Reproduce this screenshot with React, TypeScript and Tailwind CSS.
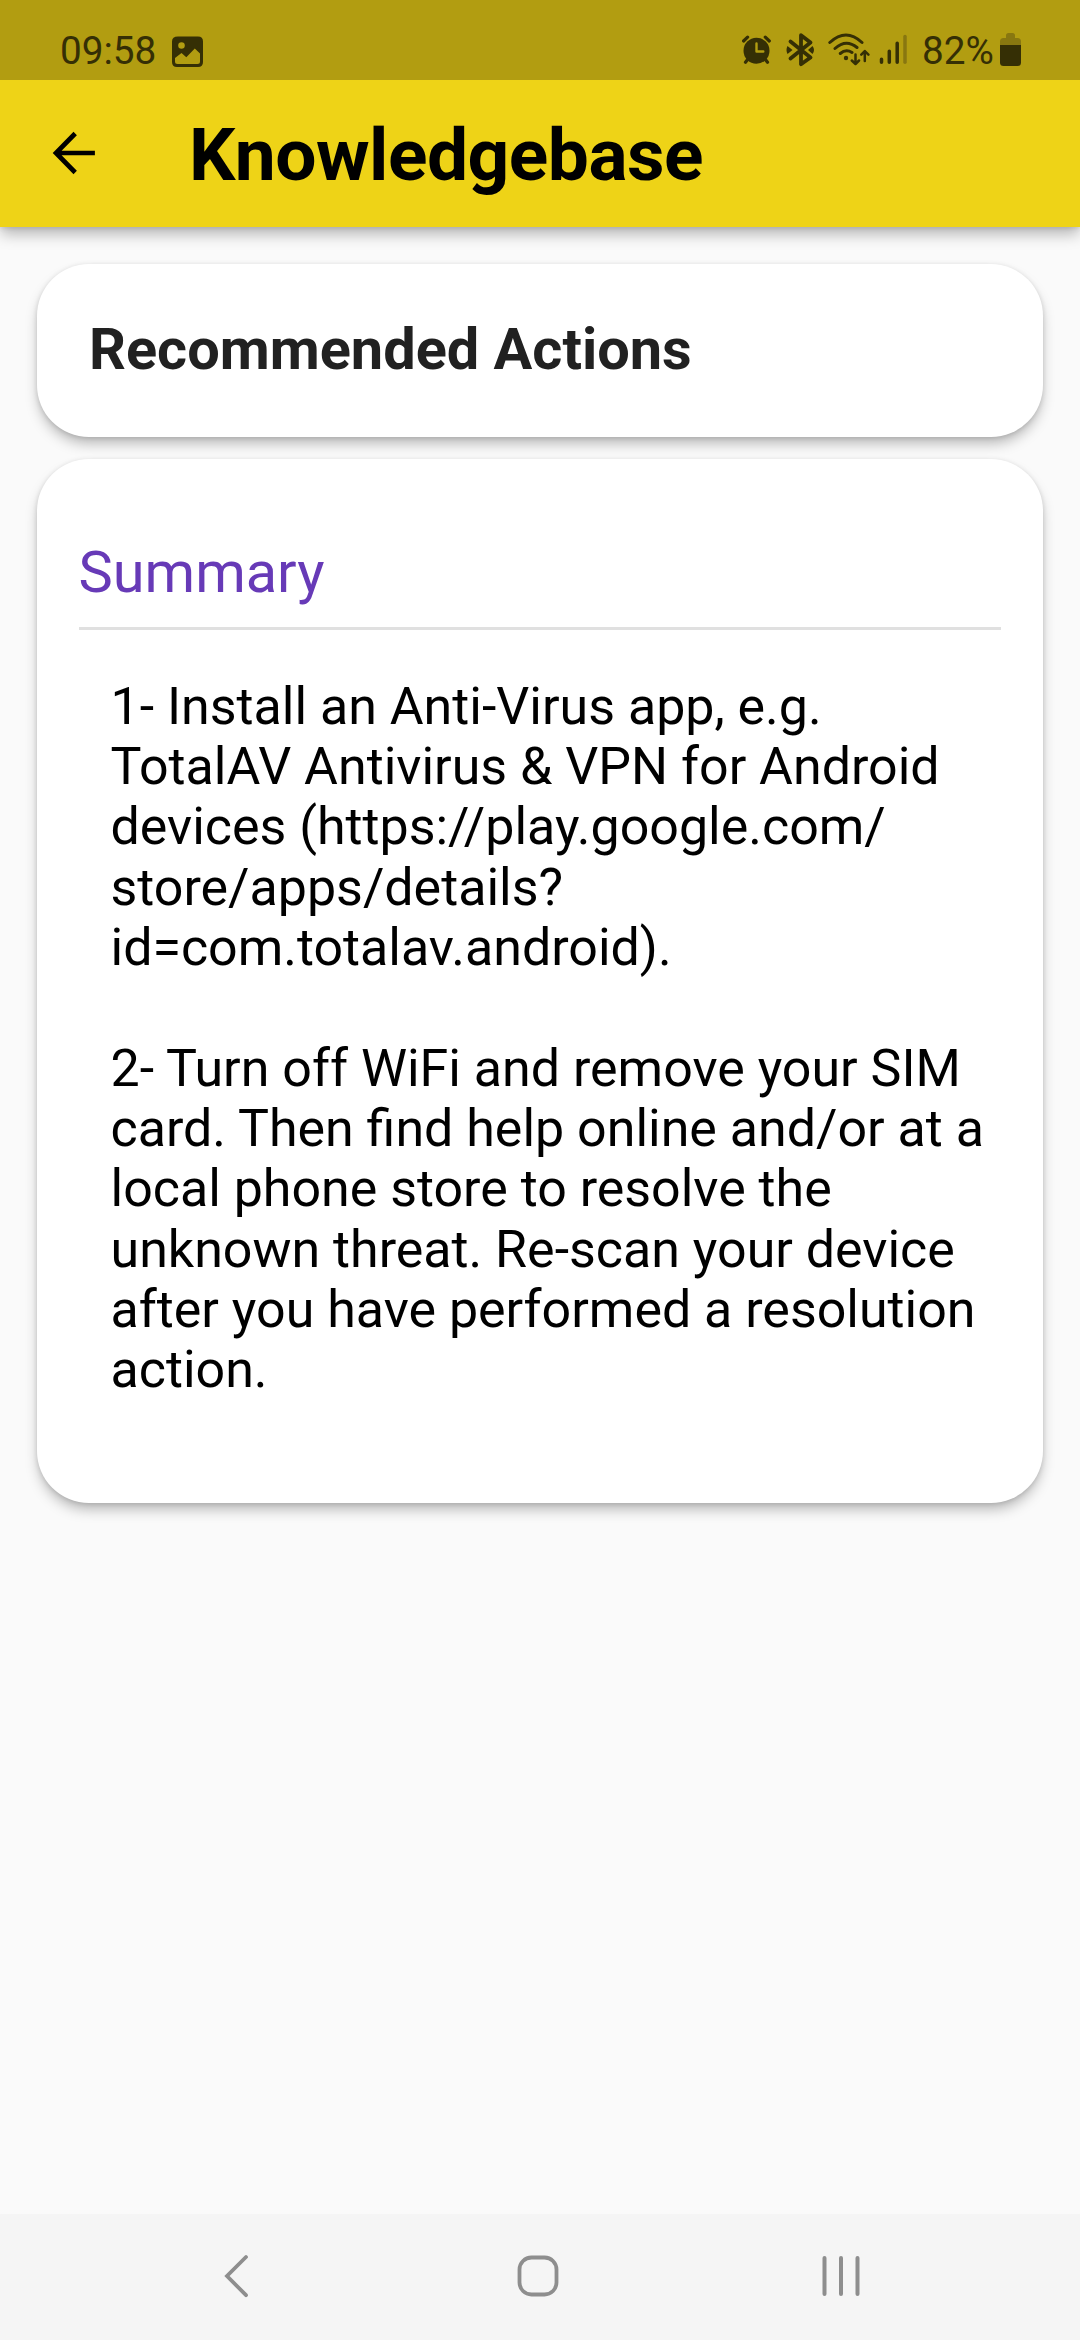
import type { ReactNode } from "react";

const INK = "#352f05";

function PictureIcon() {
  return (
    <svg className="ml-[18px] mt-0.5 h-8 w-8" viewBox="0 0 32 32" fill="none">
      <path
        fill={INK}
        fillRule="evenodd"
        d="M6 0.5H26Q31 .5 31 5.500V26Q31 31 26 31H5Q0 31 0 26V5.500Q0 .5 6 .5ZM9.500 6.200A3.300 3.300 0 1 0 9.500 12.800A3.300 3.300 0 1 0 9.500 6.200ZM3 22V25.500Q3 28 5.500 28H25.500Q28 28 28 25.500V17.500L22.800 12.600L14.300 21.200L9.500 17Z"
      />
    </svg>
  );
}

function AlarmIcon() {
  return (
    <svg className="h-8 w-[30px]" viewBox="0 0 30 32" fill="none" stroke={INK} strokeLinecap="round">
      <circle cx="14.500" cy="16.700" r="13" fill={INK} stroke="none" />
      <path d="M1.600 7L5.600 3.200M27.300 7L23.300 3.200" strokeWidth="3.200" />
      <path d="M6 25L3.500 28.300M23 25L25.500 28.300" strokeWidth="3.200" />
      <path d="M14.500 9.500V17.500H21.300" stroke="#b29d11" strokeWidth="2.400" strokeLinejoin="round" />
    </svg>
  );
}

function BluetoothIcon() {
  return (
    <svg className="ml-[14px] h-[34px] w-[30px]" viewBox="0 0 30 34" fill="none">
      <path
        d="M4.500 8.500L24.500 24.500L15 31.200V2.200L24.500 9.500L4.500 25.500"
        stroke={INK}
        strokeWidth="3.800"
        strokeLinecap="round"
        strokeLinejoin="round"
      />
      <path d="M1.500 13L6.500 17L1.500 21Q-.5 17 1.500 13ZM26.500 13L22 17L26.500 21Q29.500 17 26.500 13Z" fill={INK} />
    </svg>
  );
}

function WifiIcon() {
  return (
    <svg className="ml-3 h-[34px] w-[42px]" viewBox="0 0 42 34" fill="none" stroke={INK} strokeLinecap="round">
      <path d="M1.800 9.500Q18 -5.500 34 9.500M7 15.500Q18 5.500 29 14.500M12.300 20.500Q18 15.500 24 19.500" strokeWidth="3" />
      <circle cx="18" cy="25" r="2.200" fill={INK} stroke="none" />
      <path
        d="M27.500 21.500V30.500M23.800 27.500L27.500 31L31 27.500M36.800 28V18.500M33.300 21.700L36.800 18L40.400 21.700"
        strokeWidth="2.500"
        strokeLinejoin="round"
      />
    </svg>
  );
}

function SignalIcon() {
  return (
    <svg className="ml-[9px] h-[34px] w-7" viewBox="0 0 28 34" fill="none" stroke={INK} strokeWidth="3.500" strokeLinecap="round">
      <path d="M2.500 26.300V29.200M10.300 18.300V29.200M18.200 10.300V29.200" />
      <path d="M26 3.500V29.200" stroke="#887710" />
    </svg>
  );
}

function BatteryIcon() {
  return (
    <svg className="ml-[8px] h-[34px] w-[21px]" viewBox="0 0 21 34">
      <path d="M6 2.500Q6 0 8.500 0H12.500Q15 0 15 2.500V5H17.500Q21 5 21 8.500V14H0V8.500Q0 5 3.500 5H6Z" fill="#887710" />
      <path d="M0 12H21V29.500Q21 33 17.500 33H3.500Q0 33 0 29.500Z" fill={INK} />
    </svg>
  );
}

function StatusBar() {
  return (
    <div className="relative z-10 flex h-20 items-center bg-[#b29d11] pl-[60px] pr-[59px] pt-[21px] text-[38.7px] leading-none text-[#352f05]">
      <span className="w-[94px] whitespace-nowrap pt-[2px]">09:58</span>
      <PictureIcon />
      <div className="ml-auto flex items-center">
        <AlarmIcon />
        <BluetoothIcon />
        <WifiIcon />
        <SignalIcon />
        <span className="ml-[15px] w-[70px] whitespace-nowrap pt-[2px]">82%</span>
        <BatteryIcon />
      </div>
    </div>
  );
}

function AppBar() {
  return (
    <header className="relative flex h-[147px] items-center bg-[#eed317] pl-[52px] shadow-[0_8px_14px_-1px_rgba(0,0,0,0.28),0_1px_5px_rgba(0,0,0,0.12)]">
      <svg className="mb-[1px] h-[44px] w-[44px]" viewBox="0 0 44 44" fill="none" stroke="#000" strokeWidth="4.700">
        <path d="M42.900 22H5M23.200 2.500L4 22L23.200 41.500" />
      </svg>
      <h1 className="ml-[93px] whitespace-nowrap pt-[5px] text-[73.1px] font-bold leading-none tracking-[-0.5px] text-black">
        Knowledgebase
      </h1>
    </header>
  );
}

function Card({ className, children }: { className: string; children: ReactNode }) {
  return (
    <section
      className={`rounded-[52px] bg-white shadow-[0_8px_14px_-2px_rgba(0,0,0,0.28),0_1px_5px_rgba(0,0,0,0.12)] ${className}`}
    >
      {children}
    </section>
  );
}

function NavBar() {
  return (
    <nav className="flex h-[126px] items-center bg-[#f5f5f5] pb-[2px] pl-[223px]">
      <svg className="h-11 w-[26px]" viewBox="0 0 26 44" fill="none" stroke="#8e8e8e" strokeWidth="3.800" strokeLinecap="round">
        <path d="M23 3L4 22L23 41.200" />
      </svg>
      <svg className="ml-[268px] h-11 w-[42px]" viewBox="0 0 42 44" fill="none" stroke="#8e8e8e" strokeWidth="3.800">
        <rect x="2.500" y="3.500" width="37" height="37" rx="12" />
      </svg>
      <svg className="ml-[262px] h-11 w-10" viewBox="0 0 40 44" fill="none" stroke="#8e8e8e" strokeWidth="4" strokeLinecap="round">
        <path d="M3.500 4V40M20 4V40M36.500 4V40" />
      </svg>
    </nav>
  );
}

export default function App() {
  return (
    <div className="flex h-[2340px] w-[1080px] flex-col overflow-hidden bg-[#fafafa] font-[Roboto,sans-serif]">
      <StatusBar />
      <AppBar />
      <main className="flex flex-1 flex-col px-[37px] pt-[37px]">
        <Card className="flex h-[173px] items-center pb-[1px] pl-[52px]">
          <h2 className="whitespace-nowrap text-[57.7px] font-bold leading-none text-[#212121]">Recommended Actions</h2>
        </Card>
        <Card className="mt-[21.500px] h-[1044.500px] pl-[41.500px] pr-[42px] pt-[83px]">
          <h3 className="h-[88px] border-b-[3.500px] border-[#e0e0e0] text-[57.7px] leading-[60px] text-[#673ab7]">
            Summary
          </h3>
          <p className="whitespace-nowrap pl-8 pt-[47px] text-[51.95px] leading-[60.36px] text-black">
            1- Install an Anti-Virus app, e.g.
            <br />
            TotalAV Antivirus &amp; VPN for Android
            <br />
            devices (https://play.google.com/
            <br />
            store/apps/details?
            <br />
            id=com.totalav.android).
            <br />
            <br />
            2- Turn off WiFi and remove your SIM
            <br />
            card. Then find help online and/or at a
            <br />
            local phone store to resolve the
            <br />
            unknown threat. Re-scan your device
            <br />
            after you have performed a resolution
            <br />
            action.
          </p>
        </Card>
      </main>
      <NavBar />
    </div>
  );
}
